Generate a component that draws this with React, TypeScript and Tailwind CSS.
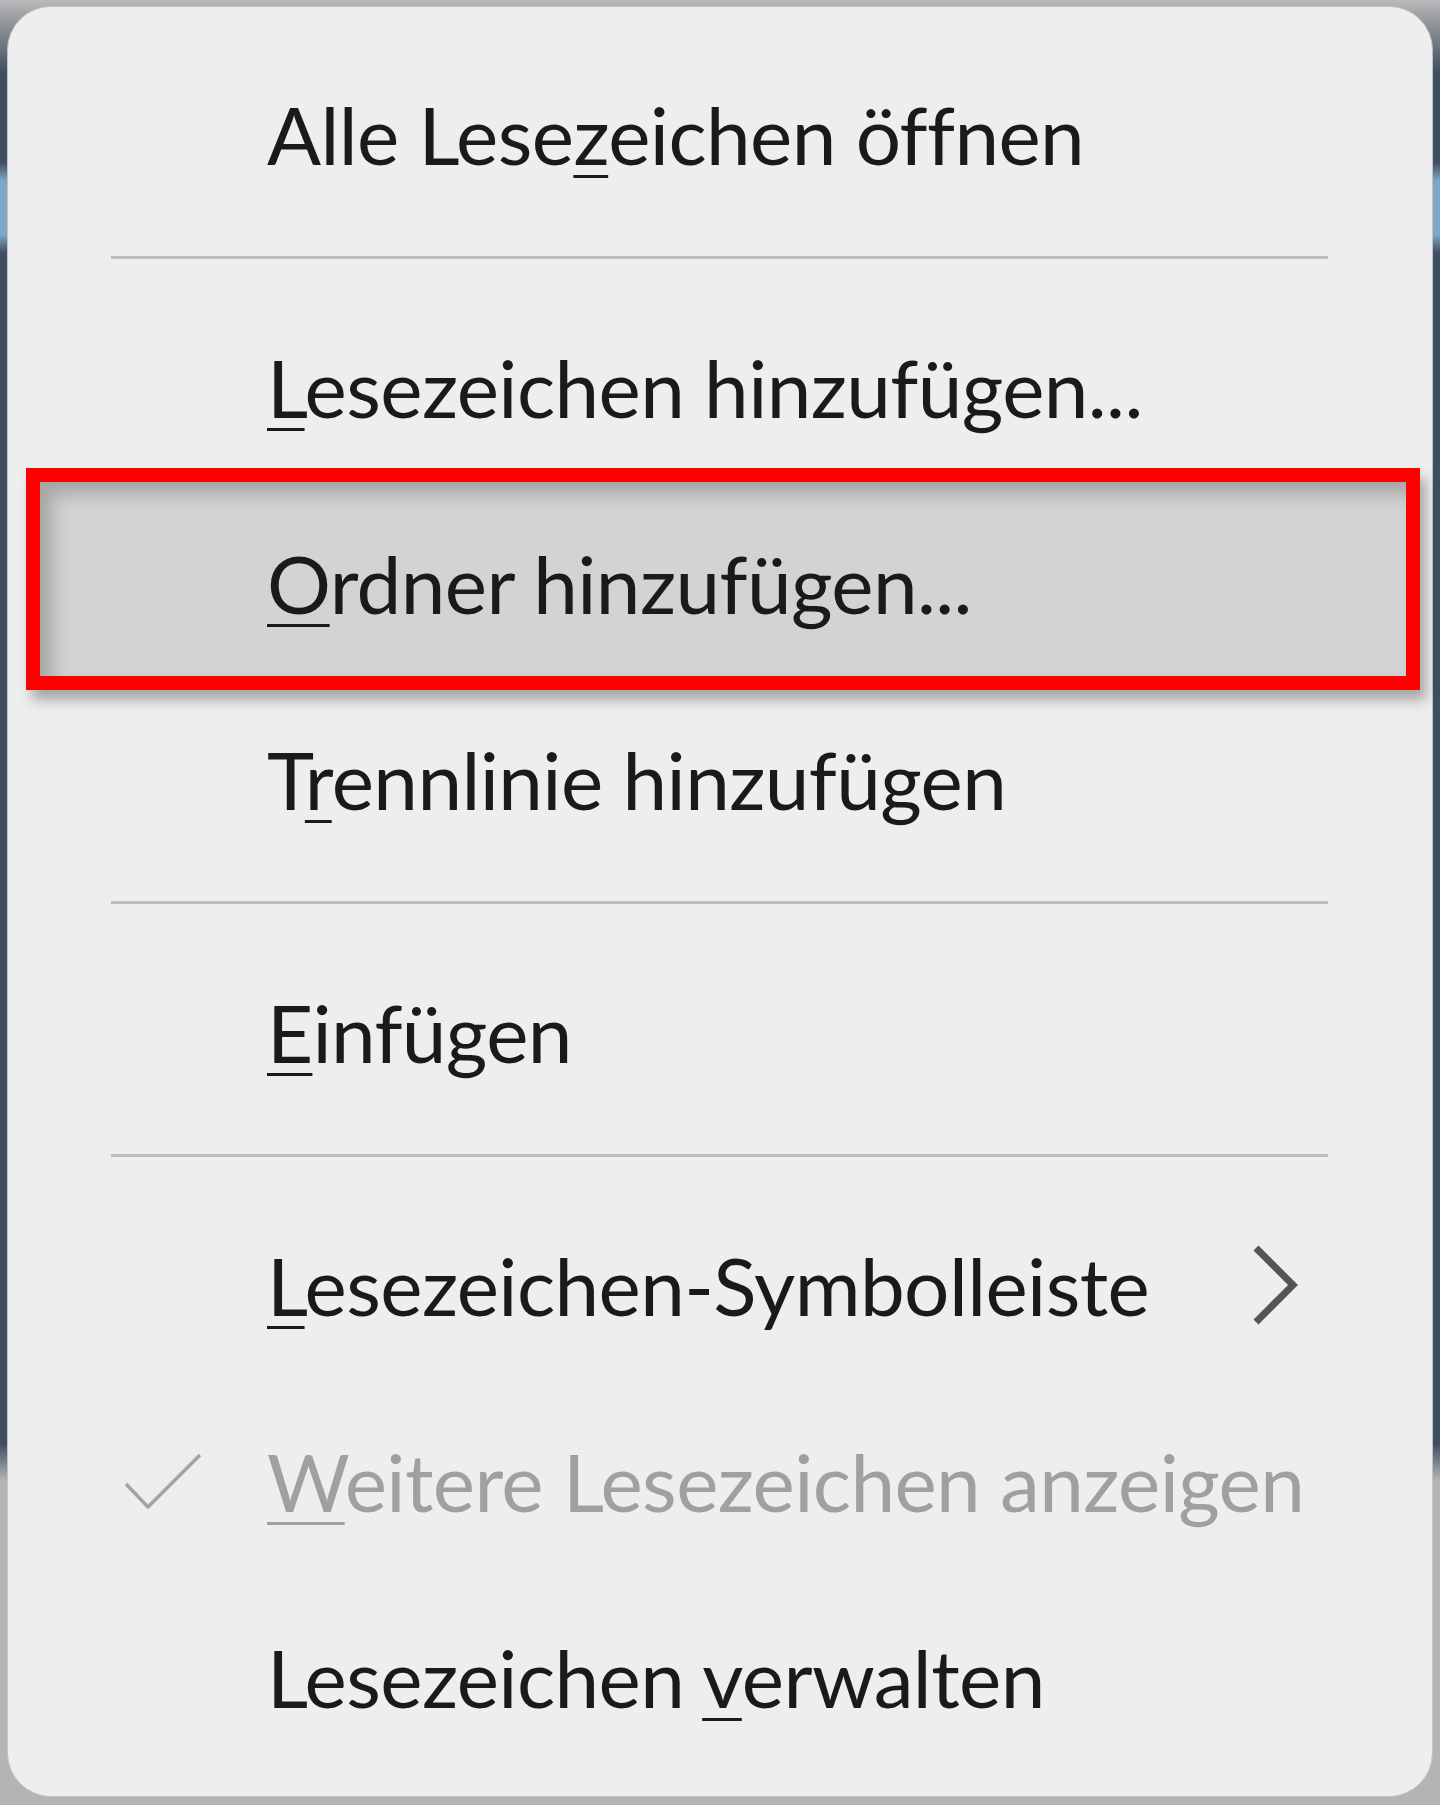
import React from 'react';

type Item =
  | { kind: 'sep' }
  | {
      kind: 'item';
      before: string;
      key: string;
      after: string;
      disabled?: boolean;
      checked?: boolean;
      submenu?: boolean;
      active?: boolean;
    };

const items: Item[] = [
  { kind: 'item', before: 'Alle Lese', key: 'z', after: 'eichen öffnen' },
  { kind: 'sep' },
  { kind: 'item', before: '', key: 'L', after: 'esezeichen hinzufügen...' },
  { kind: 'item', before: '', key: 'O', after: 'rdner hinzufügen...', active: true },
  { kind: 'item', before: 'T', key: 'r', after: 'ennlinie hinzufügen' },
  { kind: 'sep' },
  { kind: 'item', before: '', key: 'E', after: 'infügen' },
  { kind: 'sep' },
  { kind: 'item', before: '', key: 'L', after: 'esezeichen-Symbolleiste', submenu: true },
  { kind: 'item', before: '', key: 'W', after: 'eitere Lesezeichen anzeigen', disabled: true, checked: true },
  { kind: 'item', before: 'Lesezeichen ', key: 'v', after: 'erwalten' },
];

const Check = () => (
  <svg width="78" height="58" viewBox="0 0 78 58" fill="none">
    <polyline points="2,32 24,55 76,3" stroke="#a4a4a4" strokeWidth="3.5" strokeLinejoin="round" />
  </svg>
);

const Chevron = () => (
  <svg width="46" height="80" viewBox="0 0 46 80" fill="none">
    <polyline points="4,3 41,40 4,77" stroke="#555555" strokeWidth="7" strokeLinejoin="miter" />
  </svg>
);

export default function App() {
  return (
    <div className="w-[1440px] h-[1805px] bg-[linear-gradient(to_bottom,#b9b9b9_0%,#3f4f60_4%,#3f4f60_9%,#7ea6c6_10%,#7ea6c6_13%,#3f4f60_14%,#3f4f60_80%,#b4b4b4_82%)] pt-[6px] pl-[7px] pr-[7px] pb-[8px]">
      <div
        className="h-full rounded-[44px] bg-[#eeeeee] border border-[#c2c2c2] pt-[29px] flex flex-col text-[80px] tracking-[-0.6px] leading-none text-[#1a1a1a]"
        style={{ fontFamily: 'Lato, "Noto Sans", sans-serif' }}
      >
        {items.map((it, i) => {
          if (it.kind === 'sep') {
            return (
              <div key={i} className="h-[57px] pt-[24px] pl-[103px] pr-[104px]">
                <div className="h-[3px] bg-[#bdbdbd]" />
              </div>
            );
          }
          return (
            <div key={i} className="relative h-[196px] flex items-center">
              {it.active && (
                <div className="absolute -top-[17px] -bottom-[9px] left-[18px] right-[12px] border-[14px] border-[#ff0000] bg-[#d3d3d3] shadow-[inset_12px_12px_18px_rgba(0,0,0,0.22),6px_10px_12px_rgba(0,0,0,0.3)]" />
              )}
              <div className="relative w-[259px] shrink-0 pl-[116px] flex items-center">
                {it.checked && <Check />}
              </div>
              <span className={`relative whitespace-nowrap ${it.disabled ? 'text-[#a0a0a0]' : ''}`}>
                {it.before}
                <span className="underline decoration-[3px] underline-offset-[10px]">{it.key}</span>
                {it.after}
              </span>
              {it.submenu && (
                <div className="absolute right-[134px] top-0 bottom-0 flex items-center">
                  <Chevron />
                </div>
              )}
            </div>
          );
        })}
      </div>
    </div>
  );
}
